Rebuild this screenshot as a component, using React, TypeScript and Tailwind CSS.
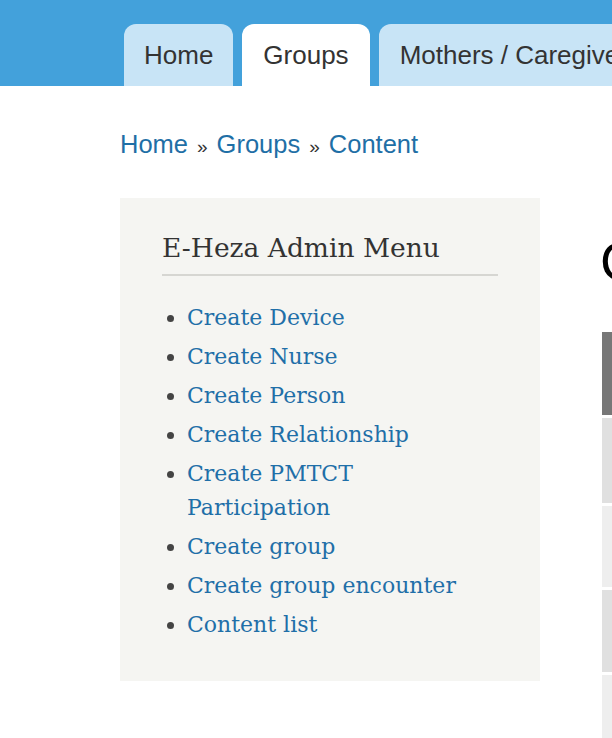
import React from 'react';

const links = [
  'Create Device',
  'Create Nurse',
  'Create Person',
  'Create Relationship',
  'Create PMTCT Participation',
  'Create group',
  'Create group encounter',
  'Content list',
];

export default function App() {
  return (
    <div className="w-[612px] h-[738px] overflow-hidden bg-white font-['Liberation_Sans',Arial,sans-serif]">
      <header className="h-[86px] bg-[#43a1db] flex items-end pl-[124px] gap-[9px] overflow-hidden">
        <div className="h-[62px] px-[20px] rounded-t-[12px] bg-[#c8e4f6] text-[#333] text-[26px] flex items-center shrink-0">
          Home
        </div>
        <div className="h-[62px] px-[21px] rounded-t-[12px] bg-white text-[#333] text-[26px] flex items-center shrink-0">
          Groups
        </div>
        <div className="h-[62px] pl-[21px] pr-[40px] rounded-t-[12px] bg-[#c8e4f6] text-[#333] text-[26px] flex items-center whitespace-nowrap shrink-0">
          Mothers / Caregivers
        </div>
      </header>

      <div className="pl-[120px] pt-[43px]">
        <nav className="text-[25.5px] text-[#1f6fa6] leading-[30px] whitespace-nowrap">
          <span>Home</span>
          <span className="text-[#333] text-[19px] mx-[9px]">»</span>
          <span>Groups</span>
          <span className="text-[#333] text-[19px] mx-[9px]">»</span>
          <span>Content</span>
        </nav>

        <div className="flex items-start mt-[36px]">
          <aside className="w-[420px] shrink-0 bg-[#f5f5f2] pt-[30px] pb-[39px] pl-[42px] pr-[42px] font-['DejaVu_Serif',Georgia,serif]">
            <h2 className="text-[26.5px] text-[#333] leading-[40px] pb-[6px] border-b-2 border-[#d6d6d2] whitespace-nowrap">
              E-Heza Admin Menu
            </h2>
            <ul className="mt-[25px] list-disc pl-[25px] text-[#444]">
              {links.map((l) => (
                <li key={l} className="text-[22px] leading-[34px] mb-[5px] last:mb-0 pr-[40px] marker:text-[#444]">
                  <span className="text-[#1f6fa8]">{l}</span>
                </li>
              ))}
            </ul>
          </aside>

          <main className="pl-[60px] pt-[33px] flex-1">
            <h1 className="text-[54px] leading-[60px] text-black whitespace-nowrap">
              Content
            </h1>
            <div className="mt-[41px] ml-[2px] w-[200px]">
              <div className="h-[83px] bg-[#777]" />
              <div className="h-[85px] mt-[3px] bg-[#e0e0e0]" />
              <div className="h-[81px] mt-[3px] bg-[#eeeeee]" />
              <div className="h-[82px] mt-[3px] bg-[#e0e0e0]" />
              <div className="h-[82px] mt-[3px] bg-[#eeeeee]" />
            </div>
          </main>
        </div>
      </div>
    </div>
  );
}
